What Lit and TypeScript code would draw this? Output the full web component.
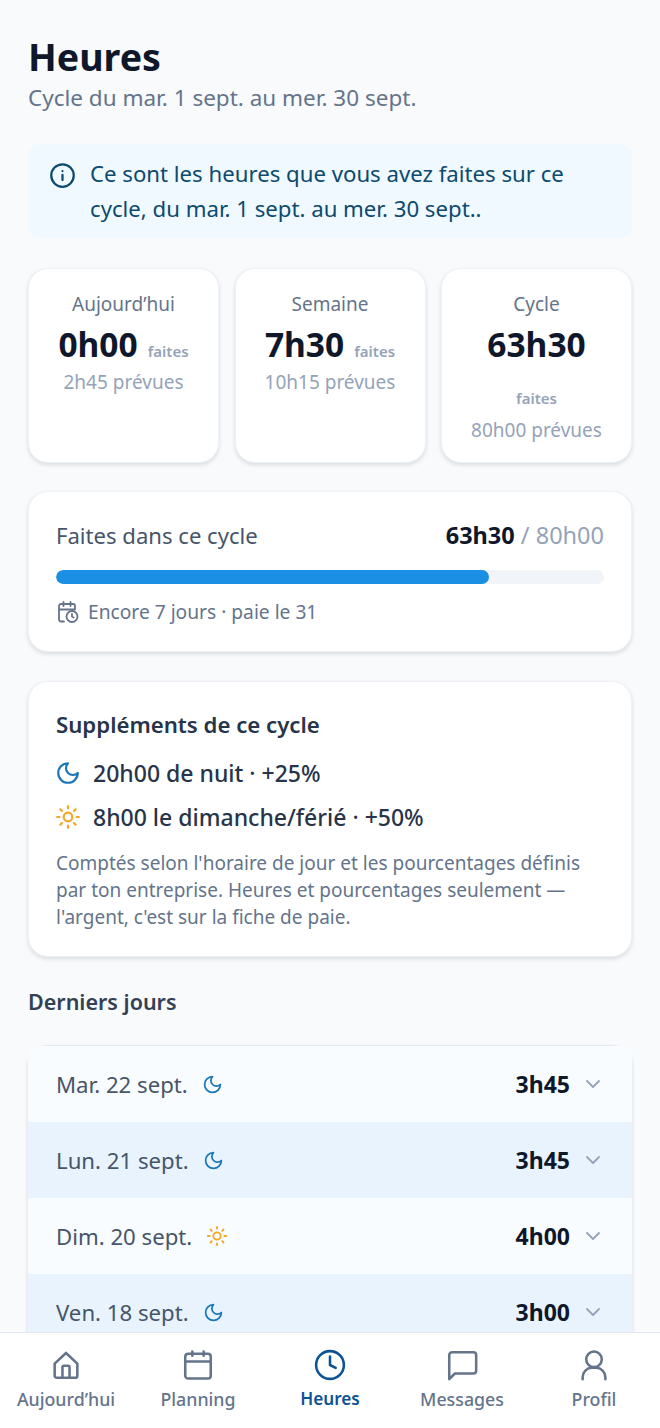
import { LitElement, html, css, svg } from "lit";
import { customElement } from "lit/decorators.js";

const moon = (s: number) => html`<svg class="ic" width=${s} height=${s} viewBox="0 0 24 24" fill="none" stroke="#1976b8" stroke-width="2" stroke-linecap="round" stroke-linejoin="round"><path d="M12 3a6 6 0 0 0 9 9 9 9 0 1 1-9-9Z"/></svg>`;
const sun = (s: number) => html`<svg class="ic" width=${s} height=${s} viewBox="0 0 24 24" fill="none" stroke="#f5a623" stroke-width="2" stroke-linecap="round" stroke-linejoin="round"><circle cx="12" cy="12" r="4"/><path d="M12 2v2M12 20v2M4.93 4.93l1.41 1.41M17.66 17.66l1.41 1.41M2 12h2M20 12h2M6.34 17.66l-1.41 1.41M19.07 4.93l-1.41 1.41"/></svg>`;

const navIcons: Record<string, unknown> = {
  home: svg`<path d="M4 11l8-7.500 8 7.500v8.500a1.500 1.500 0 0 1-1.500 1.500H5.500A1.500 1.500 0 0 1 4 19.500Z"/><path d="M9.500 21v-7.500a1 1 0 0 1 1-1h3a1 1 0 0 1 1 1V21"/>`,
  cal: svg`<rect x="3" y="4" width="18" height="17.500" rx="2"/><path d="M3 9.500h18M8 2.500v3M16 2.500v3"/>`,
  clock: svg`<circle cx="12" cy="12" r="9.800"/><path d="M12 6v6l4 2"/>`,
  msg: svg`<path d="M22 16a2 2 0 0 1-2 2H7l-4 4V5a2 2 0 0 1 2-2h15a2 2 0 0 1 2 2Z"/>`,
  user: svg`<path d="M20 22v-1.500a6.500 6.500 0 0 0-6.500-6.500h-3A6.500 6.500 0 0 0 4 20.500V22"/><circle cx="12" cy="8" r="5.500"/>`,
};

@customElement("app-root")
export class AppRoot extends LitElement {
  static styles = css`
    :host { display: flex; flex-direction: column; height: 1428px; overflow: hidden; background: #f8fafc; font-family: "Noto Sans", sans-serif; color: #0f172a; }
    * { box-sizing: border-box; }
    .main { flex: 1; min-height: 0; overflow: hidden; padding: 36px 28px 0; background: #f8fafc; }
    h1 { margin: 0; font-size: 37.600px; line-height: 42px; font-weight: 700; color: #0f172a; }
    .sub { margin: 4px 0 0; font-size: 22.500px; line-height: 32px; color: #64748b; }
    .banner { margin-top: 30px; height: 94px; padding: 12px 21px; display: flex; gap: 14px; background: #f0f9ff; border-radius: 12px; color: #0c4a6e; font-size: 22.200px; line-height: 35px; }
    .banner svg { flex: none; margin-top: 6px; }
    .stats { margin-top: 30px; display: grid; grid-template-columns: repeat(3, 1fr); gap: 15.500px; }
    .card { background: #fff; border-radius: 20px; border: 1px solid #eef2f6; box-shadow: 0 2px 4px rgba(15, 23, 42, 0.13); }
    .stat { height: 195px; padding: 21px 8px; text-align: center; }
    .stat .lbl { font-size: 19px; line-height: 28px; color: #64748b; }
    .stat .val { display: flex; flex-wrap: wrap; justify-content: center; align-items: baseline; column-gap: 10px; margin-top: 4px; }
    .stat b { font-size: 33.500px; line-height: 44px; font-weight: 700; color: #0f172a; }
    .stat .f { font-size: 15px; font-weight: 600; line-height: 32px; color: #94a3b8; }
    .stat .cy { flex-basis: 100%; line-height: 32px; margin: 16px 0 1px; }
    .stat .pr { font-size: 19px; line-height: 30px; color: #94a3b8; }
    .prog { margin-top: 28px; height: 161px; padding: 26px 27px 27px; }
    .prog .top { display: flex; justify-content: space-between; align-items: center; font-size: 22.100px; line-height: 34px; color: #475569; }
    .prog .tot { font-size: 23.500px; }
    .prog .top b { font-weight: 700; color: #0f172a; }
    .prog .top span span { color: #94a3b8; }
    .bar { margin-top: 18px; height: 14px; border-radius: 7px; background: #f1f5f9; overflow: hidden; }
    .bar div { height: 100%; border-radius: 7px; background: #1a8fe3; }
    .note { margin-top: 14px; display: flex; align-items: center; gap: 8px; font-size: 19.200px; line-height: 28px; color: #64748b; }
    .sup { margin-top: 29px; height: 276px; padding: 26px 27px; }
    .sup h2 { margin: 0; font-size: 22.200px; line-height: 34px; font-weight: 600; color: #273449; }
    .sup .ln { display: flex; align-items: center; gap: 12px; font-size: 23px; line-height: 32px; font-weight: 500; color: #273449; margin-top: 12px; }
    .sup .ln .ic { margin-left: -1px; }
    .sup .ln:first-of-type { margin-top: 15px; }
    .sup p { margin: 17px 0 0; font-size: 19px; line-height: 27px; color: #64748b; }
    h3 { margin: 28px 0 0; font-size: 21.500px; line-height: 34px; font-weight: 600; color: #334155; }
    .list { margin-top: 26px; border-radius: 20px; background: #fff; border-top: 1px solid #e2e8f0; box-shadow: 0 2px 4px rgba(15, 23, 42, 0.14); }
    .row { height: 76px; padding: 0 28px 0 28px; display: flex; align-items: center; background: #f8fcff; }
    .row.alt { background: #e8f3fd; }
    .row .d { font-size: 22.200px; color: #475569; }
    .row .ic { margin-left: 14px; }
    .row b { margin-left: auto; font-size: 23px; font-weight: 700; color: #0f172a; }
    .row .chev { margin-left: 14px; margin-right: 2px; }
    nav { flex: none; height: 96px; background: #fff; border-top: 1px solid #e2e8f0; display: grid; grid-template-columns: repeat(5, 1fr); }
    .it { display: flex; flex-direction: column; align-items: center; padding-top: 15px; font-size: 17.800px; line-height: 26px; font-weight: 500; color: #64748b; }
    .it svg { display: block; margin-bottom: 4px; }
    .it.on { color: #0b5394; font-weight: 600; font-size: 17.200px; }
  `;

  private stat(l: string, v: string, p: string, cy = false) {
    return html`<div class="card stat"><div class="lbl">${l}</div><div class="val"><b>${v}</b><span class="f ${cy ? "cy" : ""}">faites</span></div><div class="pr">${p}</div></div>`;
  }

  private row(d: string, icon: unknown, v: string, alt: boolean) {
    return html`<div class="row ${alt ? "alt" : ""}"><span class="d">${d}</span>${icon}<b>${v}</b>
      <svg class="chev" width="18" height="18" viewBox="0 0 18 18" fill="none" stroke="#94a3b8" stroke-width="1.800" stroke-linecap="round" stroke-linejoin="round"><path d="M3 6l6 6 6-6"/></svg></div>`;
  }

  private nav(l: string, k: string, on = false) {
    return html`<div class="it ${on ? "on" : ""}"><svg width="34" height="34" viewBox="0 0 24 24" fill="none" stroke=${on ? "#0b5394" : "#64748b"} stroke-width="1.800" stroke-linecap="round" stroke-linejoin="round">${navIcons[k]}</svg>${l}</div>`;
  }

  render() {
    return html`<div class="main">
        <h1>Heures</h1>
        <p class="sub">Cycle du mar. 1 sept. au mer. 30 sept.</p>
        <div class="banner">
          <svg width="27" height="27" viewBox="0 0 24 24" fill="none" stroke="#0c4a6e" stroke-width="2" stroke-linecap="round"><circle cx="12" cy="12" r="10"/><path d="M12 16v-4.500M12 8h.01"/></svg>
          <div>Ce sont les heures que vous avez faites sur ce cycle, du mar. 1 sept. au mer. 30 sept..</div>
        </div>
        <div class="stats">
          ${this.stat("Aujourd’hui", "0h00", "2h45 prévues")}
          ${this.stat("Semaine", "7h30", "10h15 prévues")}
          ${this.stat("Cycle", "63h30", "80h00 prévues", true)}
        </div>
        <div class="card prog">
          <div class="top"><span>Faites dans ce cycle</span><span class="tot"><b>63h30</b><span> / 80h00</span></span></div>
          <div class="bar"><div style="width:79%"></div></div>
          <div class="note">
            <svg width="24" height="24" viewBox="0 0 24 24" fill="none" stroke="#64748b" stroke-width="1.800" stroke-linecap="round" stroke-linejoin="round"><path d="M8 21.500H5a2 2 0 0 1-2-2V6a2 2 0 0 1 2-2h12a2 2 0 0 1 2 2v3M3 9.500h16M7.500 2v4M14.500 2v4"/><circle cx="16" cy="16.500" r="5.500"/><path d="M16 14v2.500l1.700 1"/></svg>
            Encore 7 jours · paie le 31
          </div>
        </div>
        <div class="card sup">
          <h2>Suppléments de ce cycle</h2>
          <div class="ln">${moon(26)}20h00 de nuit · +25%</div>
          <div class="ln">${sun(26)}8h00 le dimanche/férié · +50%</div>
          <p>Comptés selon l'horaire de jour et les pourcentages définis par ton entreprise. Heures et pourcentages seulement — l'argent, c'est sur la fiche de paie.</p>
        </div>
        <h3>Derniers jours</h3>
        <div class="list">
          ${this.row("Mar. 22 sept.", moon(21), "3h45", false)}
          ${this.row("Lun. 21 sept.", moon(21), "3h45", true)}
          ${this.row("Dim. 20 sept.", sun(22), "4h00", false)}
          ${this.row("Ven. 18 sept.", moon(21), "3h00", true)}
        </div>
      </div>
      <nav>
        ${this.nav("Aujourd’hui", "home")}
        ${this.nav("Planning", "cal")}
        ${this.nav("Heures", "clock", true)}
        ${this.nav("Messages", "msg")}
        ${this.nav("Profil", "user")}
      </nav>`;
  }
}
